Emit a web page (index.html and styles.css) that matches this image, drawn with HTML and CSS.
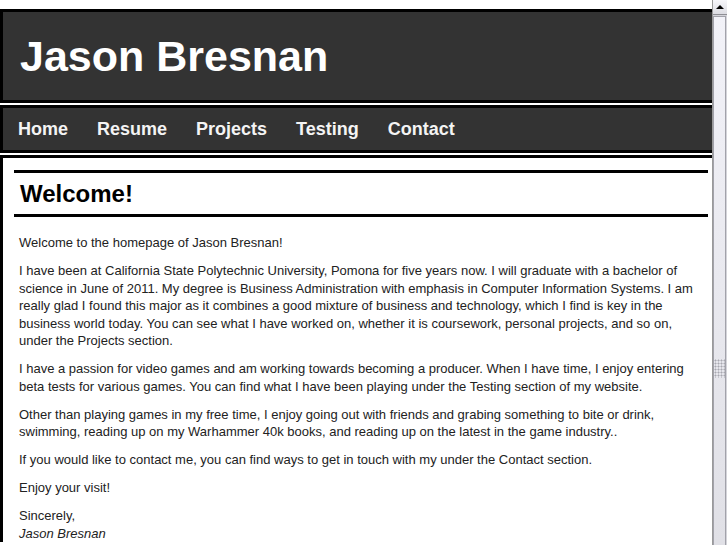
FILE: index.html
```html
<!DOCTYPE html>
<html>
<head>
    <title>Jason Bresnan</title>
    <link rel="stylesheet" href="styles.css">
</head>
<body>
<div class="page">
    <div class="header">
        <h1>Jason Bresnan</h1>
    </div>
    <div class="nav">
        <ul>
            <li><a href="#">Home</a></li>
            <li><a href="#">Resume</a></li>
            <li><a href="#">Projects</a></li>
            <li><a href="#">Testing</a></li>
            <li><a href="#">Contact</a></li>
        </ul>
    </div>
    <div class="content">
        <h2>Welcome!</h2>
        <p>Welcome to the homepage of Jason Bresnan!</p>
        <p>I have been at California State Polytechnic University, Pomona for five years now. I will graduate with a bachelor of science in June of 2011. My degree is Business Administration with emphasis in Computer Information Systems. I am really glad I found this major as it combines a good mixture of business and technology, which I find is key in the business world today. You can see what I have worked on, whether it is coursework, personal projects, and so on, under the Projects section.</p>
        <p>I have a passion for video games and am working towards becoming a producer. When I have time, I enjoy entering beta tests for various games. You can find what I have been playing under the Testing section of my website.</p>
        <p>Other than playing games in my free time, I enjoy going out with friends and grabing something to bite or drink, swimming, reading up on my Warhammer 40k books, and reading up on the latest in the game industry..</p>
        <p>If you would like to contact me, you can find ways to get in touch with my under the Contact section.</p>
        <p>Enjoy your visit!</p>
        <p>Sincerely,<br><em>Jason Bresnan</em></p>
    </div>
</div>
<div class="scrollbar">
    <div class="sb-button"><span class="sb-arrow"></span></div>
    <div class="sb-thumb"><span class="sb-grip"></span></div>
</div>
</body>
</html>
```

FILE: styles.css
```css
html, body {
    margin: 0;
    padding: 0;
    height: 100%;
    overflow: hidden;
    background-color: #ffffff;
    color: #222222;
    font-family: "Liberation Sans", Arial, sans-serif;
}

body {
    display: flex;
}

.page {
    width: 712px;
    flex: none;
    overflow: hidden;
    padding-top: 9px;
}

.header {
    background-color: #333333;
    border: 3px solid #000000;
    border-right: none;
    padding: 22px 0 22px 17px;
}

.header h1 {
    margin: 0;
    font-size: 43px;
    line-height: 44px;
    color: #ffffff;
}

.nav {
    margin-top: 2px;
    background-color: #333333;
    border: 3px solid #000000;
    border-right: none;
}

.nav ul {
    display: flex;
    gap: 29px;
    margin: 0;
    padding: 0 0 0 15px;
    list-style: none;
}

.nav a {
    display: block;
    color: #f4f4f4;
    text-decoration: none;
    font-weight: bold;
    font-size: 18px;
    line-height: 42px;
}

.content {
    margin-top: 2px;
    border-top: 3px solid #000000;
    border-left: 3px solid #000000;
    padding: 12px 4px 0 11px;
}

.content h2 {
    margin: 0 0 17px;
    padding-left: 6px;
    border-top: 3px solid #000000;
    border-bottom: 3px solid #000000;
    font-size: 24px;
    line-height: 41px;
    color: #000000;
}

.content p {
    margin: 0 0 10.5px;
    padding-left: 5px;
    font-size: 13px;
    line-height: 17.5px;
}

.scrollbar {
    width: 15px;
    flex: none;
    display: flex;
    flex-direction: column;
    overflow: hidden;
    background-color: #d4d4da;
    border-left: 1px solid #9a9a9a;
    box-sizing: border-box;
}

.sb-button {
    height: 15px;
    flex: none;
    display: flex;
    align-items: center;
    justify-content: center;
    background: linear-gradient(#f6f6fa, #dcdce2);
    border-bottom: 1px solid #8e8e94;
    box-sizing: border-box;
}

.sb-arrow {
    width: 0;
    height: 0;
    border-left: 4px solid transparent;
    border-right: 4px solid transparent;
    border-bottom: 4px solid #000000;
}

.sb-thumb {
    height: 702px;
    flex: none;
    display: flex;
    align-items: center;
    justify-content: center;
    margin: 1px 1px 0 0;
    border: 1px solid #a2a2aa;
    border-bottom: none;
    background: linear-gradient(#f2f2f8, #e6e6ec 50%, #dadae0);
}

.sb-grip {
    width: 11px;
    height: 19px;
    background-image: radial-gradient(circle, #a8a8b0 0.8px, transparent 1.2px);
    background-size: 3px 3px;
}
```
